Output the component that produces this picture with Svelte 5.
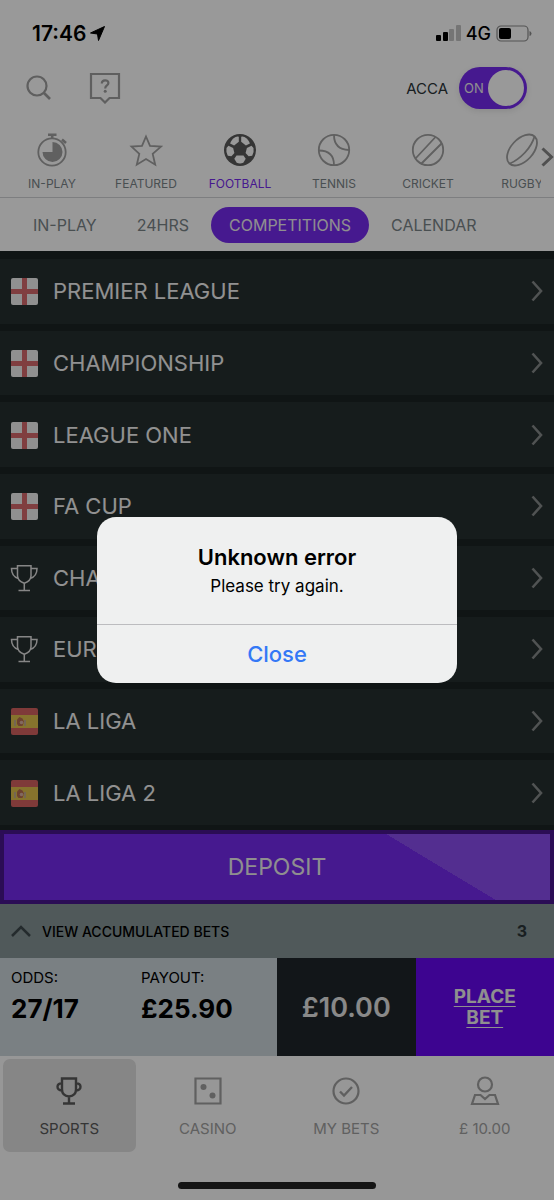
<script>
    let acca = true;
    let showError = true;
    let activeSport = 'FOOTBALL';
    let activeFilter = 'COMPETITIONS';
    let activeTab = 'SPORTS';

    const sports = ['IN-PLAY', 'FEATURED', 'FOOTBALL', 'TENNIS', 'CRICKET', 'RUGBY'];
    const filters = ['IN-PLAY', '24HRS', 'COMPETITIONS', 'CALENDAR'];
    const tabs = ['SPORTS', 'CASINO', 'MY BETS', '£ 10.00'];

    const competitions = [
        { name: 'PREMIER LEAGUE', icon: 'england' },
        { name: 'CHAMPIONSHIP', icon: 'england' },
        { name: 'LEAGUE ONE', icon: 'england' },
        { name: 'FA CUP', icon: 'england' },
        { name: 'CHAMPIONS LEAGUE', icon: 'cup' },
        { name: 'EUROPA LEAGUE', icon: 'cup' },
        { name: 'LA LIGA', icon: 'spain' },
        { name: 'LA LIGA 2', icon: 'spain' }
    ];
</script>

<div class="app">
    <div class="status">
        <div class="clock">
            <span>17:46</span>
            <svg width="15" height="15" viewBox="0 0 15 15"><path d="M14.5 .5 8.500 14.5 7.500 8 .5 7z" fill="#000" stroke="#000" stroke-linejoin="round" /></svg>
        </div>
        <div class="signal">
            <svg width="25" height="16" viewBox="0 0 25 16">
                <rect x="0" y="10" width="5" height="6" rx="1" />
                <rect x="7" y="7" width="5" height="9" rx="1" />
                <rect x="13" y="4" width="5" height="12" rx="1" fill="#c4c4c4" />
                <rect x="20" y="0" width="5" height="16" rx="1" fill="#c4c4c4" />
            </svg>
            <span>4G</span>
            <svg width="36" height="17" viewBox="0 0 36 17">
                <rect x="1" y="1" width="31" height="15" rx="4" fill="none" stroke="#8c8c8c" stroke-width="1.2" />
                <rect x="3" y="3" width="12" height="11" rx="2" />
                <path d="M33.5 6q2 .5 2 2.5t-2 2.5z" fill="#8c8c8c" />
            </svg>
        </div>
    </div>

    <header>
        <button class="icon-btn" aria-label="Search">
            <svg width="26" height="26" viewBox="0 0 26 26" fill="none" stroke="#9e9e9e" stroke-width="2.2">
                <circle cx="11" cy="11" r="9.5" />
                <path d="m17.5 17.5 6.5 6.5" stroke-width="2.6" />
            </svg>
        </button>
        <button class="icon-btn" aria-label="Help">
            <svg width="32" height="32" viewBox="0 0 32 32" fill="none" stroke="#9e9e9e" stroke-width="2.2">
                <path d="M2 2h28v24h-9.500L16 30.500 11.500 26H2z" />
                <path d="M12.8 11.5c0-4.2 6.600-4.200 6.600-.4 0 2.500-3.200 2.300-3.200 5.400" />
                <circle cx="16.2" cy="19.3" r="1.5" fill="#9e9e9e" stroke="none" />
            </svg>
        </button>
        <label class="acca">
            <span>ACCA</span>
            <input type="checkbox" role="switch" bind:checked={acca} />
            <span class="switch" class:off={!acca}>
                <span class="state">{acca ? 'ON' : 'OFF'}</span>
                <span class="knob"></span>
            </span>
        </label>
    </header>

    <nav class="sports">
        <div class="sport-list">
            {#each sports as sport}
                <button class:active={sport === activeSport} on:click={() => (activeSport = sport)}>
                    <svg width="34" height="34" viewBox="0 0 34 34" fill="none" stroke="#a0a0a0" stroke-width="1.8">
                        {#if sport === 'IN-PLAY'}
                            <circle cx="17" cy="19" r="13.7" />
                            <path d="M13 1.8h8.500M17.200 2v4M27 6.500l4 3.500" stroke-width="2.6" />
                            <path d="M17.5 9v10h-10a10 10 0 1 0 10-10z" fill="#a0a0a0" stroke="none" />
                        {:else if sport === 'FEATURED'}
                            <path d="m17 3.5 4 9.300 11 .8-8.300 7.300 2.500 10.800L17 26l-9.200 5.700 2.500-10.800L2.500 13.600l10.500-.8z" />
                        {:else if sport === 'FOOTBALL'}
                            <circle cx="17" cy="17" r="16" fill="#595959" stroke="none" />
                            <g fill="#fff" stroke="none">
                                <path d="M12.5 4q2-1 3.300-.3v5.100l-4.700 3.600-4-1.800Q8.500 6 12.500 4z" />
                                <path d="M21.5 4q-2-1-3.300-.3v5.100l4.700 3.600 4-1.800Q25.500 6 21.500 4z" />
                                <path d="m3.5 15 2-2.300 4.600 2.200 1.300 5-3 3.300-3.600-.5Q2.700 19 3.500 15z" />
                                <path d="m30.5 15-2-2.300-4.600 2.200-1.300 5 3 3.300 3.600-.5q2.100-3.700 1.300-7.700z" />
                                <path d="M13.5 22.500h7l2.200 3.300-2.400 4q-3.300 1.300-6.600 0l-2.400-4z" />
                            </g>
                        {:else if sport === 'TENNIS'}
                            <circle cx="17" cy="17" r="15.2" />
                            <path d="M17 2q0 14.500 15 15M2 17.500q15 0 15 14.500" />
                        {:else if sport === 'CRICKET'}
                            <circle cx="17" cy="17" r="15.2" />
                            <path d="M24.5 4 4.500 25.500M30.500 10.500 10 31" />
                        {:else}
                            <ellipse cx="17" cy="17" rx="18.5" ry="11" transform="rotate(-47 17 17)" />
                            <path d="M29.5 3.500q-2.500 8.500-9.500 16T5 30.500" />
                        {/if}
                    </svg>
                    <span>{sport}</span>
                </button>
            {/each}
        </div>
        <button class="more" aria-label="More sports">
            <svg width="13" height="20" viewBox="0 0 13 20" fill="none" stroke="#858585" stroke-width="3"><path d="m1.5 1.500 9 8.500-9 8.500" /></svg>
        </button>
    </nav>

    <nav class="filters">
        {#each filters as filter}
            <button class:active={filter === activeFilter} on:click={() => (activeFilter = filter)}>{filter}</button>
        {/each}
    </nav>

    <main>
        {#each competitions as comp}
            <button class="row">
                <svg width="28" height="28" viewBox="0 0 28 28">
                    {#if comp.icon === 'england'}
                        <rect x="1" y="1" width="27" height="27" rx="2" fill="#f0f0f0" />
                        <path d="M12 1h5v11h11v5H17v11h-5V17H1v-5h11z" fill="#d5686c" />
                    {:else if comp.icon === 'spain'}
                        <rect x="1" y="1" width="27" height="27" rx="2" fill="#d4615f" />
                        <path d="M1 8h27v13H1z" fill="#e0c04c" />
                        <path d="M5 13v6M15 13v6" stroke="#c4aa8a" stroke-width="2" />
                        <path d="M7 12.500l2.500-2.500 3 1.500 1.500 3-1.500 4.500H8.500L7 17z" fill="#b76d50" />
                        <circle cx="11.5" cy="15.5" r="1.8" fill="#d9b0a0" />
                    {:else}
                        <g fill="none" stroke="#e0e0e0" stroke-width="1.5">
                            <path d="M7.5 1.800H21v10q0 5-6.700 7.500-6.800-2.500-6.800-7.500z" />
                            <path d="M7.5 4.500h-6q0 8 7 10M21 4.500h6q0 8-7 10M14.300 19.500v6.500M8.500 26.500h11.500" />
                        </g>
                    {/if}
                </svg>
                <span>{comp.name}</span>
                <svg width="12" height="22" viewBox="0 0 12 22" fill="none" stroke="#868a8a" stroke-width="2.6"><path d="M1.500 1.500 10 11l-8.500 9.500" /></svg>
            </button>
        {/each}
    </main>

    <button class="deposit">DEPOSIT</button>

    <button class="accumulated">
        <svg width="20" height="12" viewBox="0 0 20 12" fill="none" stroke="#3d484b" stroke-width="2.5"><path d="m1 11 9-9 9 9" /></svg>
        <span>VIEW ACCUMULATED BETS</span>
        <b>3</b>
    </button>

    <section class="bet">
        <div class="figures">
            <div>
                <span>ODDS:</span>
                <strong>27/17</strong>
            </div>
            <div>
                <span>PAYOUT:</span>
                <strong>£25.90</strong>
            </div>
        </div>
        <button class="stake">£10.00</button>
        <button class="place">PLACE BET</button>
    </section>

    <footer>
        <nav class="tabs">
            {#each tabs as tab}
                <button class:active={tab === activeTab} on:click={() => (activeTab = tab)}>
                    <svg width="30" height="30" viewBox="0 0 30 30" fill="none" stroke="currentColor" stroke-width="2.2">
                        {#if tab === 'SPORTS'}
                            <path d="M8 2.500h14v11q0 6-7 7-7-1-7-7zM8 7.500c-6-1-6 7.500 0 7M22 7.500c6-1 6 7.500 0 7M15 20v7M9 27.500h12" stroke-width="2.4" />
                        {:else if tab === 'CASINO'}
                            <path d="M2.500 2.500h25v25h-25z" />
                            <circle cx="10.5" cy="11" r="3" fill="currentColor" stroke="none" />
                            <circle cx="19.5" cy="19.500" r="3" fill="currentColor" stroke="none" />
                        {:else if tab === 'MY BETS'}
                            <circle cx="15" cy="15" r="12.5" />
                            <path d="m9 15.500 4 4 8-8.500" stroke-width="2.4" />
                        {:else}
                            <circle cx="15" cy="8.5" r="7" />
                            <path d="M5 19h5.500l4.500 4 4.500-4H25l3 9H2z" />
                        {/if}
                    </svg>
                    <span>{tab}</span>
                </button>
            {/each}
        </nav>
        <div class="home-bar"></div>
    </footer>

    {#if showError}
        <div class="backdrop">
            <div class="alert" role="alertdialog" aria-labelledby="alert-title" aria-describedby="alert-text">
                <h2 id="alert-title">Unknown error</h2>
                <p id="alert-text">Please try again.</p>
                <button on:click={() => (showError = false)}>Close</button>
            </div>
        </div>
    {/if}
</div>

<style>
    :global(body) {
        margin: 0;
        background: #fff;
    }

    .app {
        position: relative;
        display: flex;
        flex-direction: column;
        min-height: 100vh;
        overflow: hidden;
        background: #fff;
        font-family: Inter, "Liberation Sans", sans-serif;
    }

    button {
        padding: 0;
        border: none;
        background: none;
        color: inherit;
        font: inherit;
        cursor: pointer;
    }

    svg {
        display: block;
        flex: none;
    }

    .status {
        display: flex;
        align-items: center;
        justify-content: space-between;
        height: 66px;
        padding: 0 22px 0 32px;
    }

    .clock,
    .signal {
        display: flex;
        align-items: center;
        gap: 4px;
        font-size: 21px;
        font-weight: 600;
    }

    .signal {
        gap: 5px;
        font-size: 18px;
        font-weight: 500;
    }

    header {
        display: flex;
        align-items: center;
        gap: 37px;
        height: 44px;
        padding: 0 27px 0 26px;
    }

    .acca {
        display: flex;
        align-items: center;
        gap: 11px;
        margin-left: auto;
        color: #2b3438;
        font-size: 15px;
    }

    .acca input {
        position: absolute;
        opacity: 0;
    }

    .switch {
        display: flex;
        align-items: center;
        justify-content: space-between;
        box-sizing: border-box;
        width: 68px;
        height: 42px;
        padding: 0 3px 0 5px;
        border-radius: 21px;
        background: #762aee;
        box-shadow: 0 2px 6px rgba(0, 0, 0, 0.1);
    }

    .switch.off {
        flex-direction: row-reverse;
        background: #aaa;
    }

    .state {
        color: #eee;
        font-size: 13px;
    }

    .knob {
        width: 36px;
        height: 36px;
        border-radius: 50%;
        background: #fff;
    }

    .sports {
        display: flex;
        height: 87px;
        border-bottom: 1px solid #d0d2d6;
    }

    .sport-list {
        display: flex;
        flex: 1;
        min-width: 0;
        padding-left: 5px;
        overflow: hidden;
    }

    .sport-list button {
        display: flex;
        flex: none;
        flex-direction: column;
        align-items: center;
        gap: 8px;
        width: 94px;
        padding-top: 23px;
        color: #7a8488;
        font-size: 12px;
        line-height: 18px;
    }

    .sport-list .active {
        color: #762aee;
    }

    .more {
        align-self: flex-start;
        padding-top: 37px;
    }

    .filters {
        display: flex;
        align-items: center;
        gap: 4px;
        height: 53px;
        padding-left: 15px;
    }

    .filters button {
        flex: none;
        padding: 0 18px;
        border-radius: 18px;
        color: #7a8488;
        font-size: 16px;
        line-height: 36px;
    }

    .filters .active {
        background: #762aee;
        color: #eee;
    }

    main {
        display: flex;
        flex: 1;
        flex-direction: column;
        gap: 7px;
        padding: 8px 0 5px;
        background: #1c2323;
    }

    .row {
        display: flex;
        flex: 1;
        align-items: center;
        gap: 15px;
        min-height: 48px;
        padding: 0 11px 0 10px;
        background: #262f2f;
        color: #f2f2f2;
        font-size: 22px;
        text-align: left;
    }

    .row span {
        flex: 1;
    }

    .deposit {
        height: 74px;
        border: 4px solid #48178e;
        background: linear-gradient(31deg, #762aee 75%, #8a4df0 75%);
        color: #eee;
        font-size: 23px;
    }

    .accumulated {
        display: flex;
        align-items: center;
        gap: 11px;
        height: 54px;
        padding: 0 27px 0 11px;
        background: #859496;
        color: #000;
        font-size: 14px;
        font-weight: 500;
    }

    .accumulated b {
        margin-left: auto;
        color: #2b3438;
        font-size: 16px;
    }

    .bet {
        display: grid;
        grid-template-columns: 2fr 1fr 1fr;
        height: 98px;
    }

    .figures {
        display: grid;
        grid-template-columns: 130px 1fr;
        padding: 10px 0 0 11px;
        background: #cbd5da;
    }

    .figures span,
    .figures strong {
        display: block;
        font-size: 15px;
        line-height: 20px;
    }

    .figures strong {
        margin-top: 4px;
        font-size: 26px;
        line-height: 34px;
    }

    .stake {
        background: #1e262b;
        color: #e4e4e4;
        font-size: 27px;
        font-weight: 600;
    }

    .place {
        padding: 0 32px;
        background: #6608f0;
        color: #eee;
        font-size: 19px;
        font-weight: 700;
        line-height: 21px;
        text-decoration: underline;
        text-underline-offset: 3px;
    }

    footer {
        display: flex;
        flex-direction: column;
        align-items: center;
        height: 144px;
        background: #fcfcfc;
    }

    .tabs {
        display: grid;
        grid-template-columns: repeat(4, 1fr);
        width: 100%;
    }

    .tabs button {
        display: flex;
        flex-direction: column;
        align-items: center;
        gap: 13px;
        height: 93px;
        box-sizing: border-box;
        margin: 3px 3px 0;
        padding-top: 17px;
        border-radius: 7px;
        color: #a0a0a0;
        font-size: 15px;
        line-height: 20px;
    }

    .tabs .active {
        background: #dfdfdf;
        color: #595959;
    }

    .home-bar {
        width: 198px;
        height: 7px;
        margin-top: 30px;
        border-radius: 4px;
        background: #232323;
    }

    .backdrop {
        position: absolute;
        inset: 0;
        display: flex;
        align-items: center;
        justify-content: center;
        background: rgba(0, 0, 0, 0.4);
    }

    .alert {
        width: 65%;
        overflow: hidden;
        border-radius: 19px;
        background: #eff0f0;
        color: #000;
        text-align: center;
    }

    .alert h2 {
        margin: 25px 0 0;
        font-size: 22px;
        font-weight: 600;
        line-height: 30px;
    }

    .alert p {
        margin: 2px 0 26px;
        font-size: 17px;
        line-height: 24px;
    }

    .alert button {
        width: 100%;
        border-top: 1px solid #bcbcbf;
        color: #3478f6;
        font-size: 22px;
        font-weight: 500;
        line-height: 58px;
    }
</style>
